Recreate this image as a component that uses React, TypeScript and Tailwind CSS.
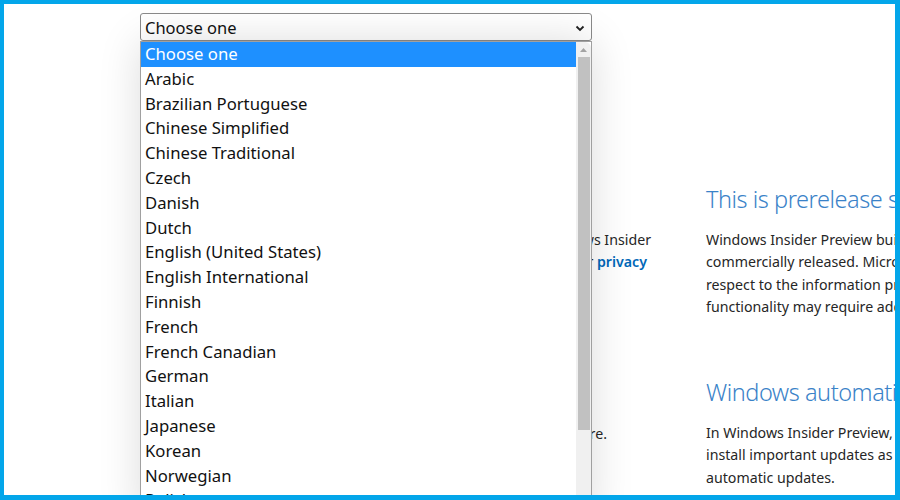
import React from "react";

const langs = [
  "Choose one",
  "Arabic",
  "Brazilian Portuguese",
  "Chinese Simplified",
  "Chinese Traditional",
  "Czech",
  "Danish",
  "Dutch",
  "English (United States)",
  "English International",
  "Finnish",
  "French",
  "French Canadian",
  "German",
  "Italian",
  "Japanese",
  "Korean",
  "Norwegian",
  "Polish",
];

export default function App() {
  return (
    <div className="w-[900px] h-[500px] bg-white border-[#03a6ea] border-t-[4px] border-l-[4px] border-r-[5px] border-b-[5px] overflow-hidden relative font-['Noto_Sans',sans-serif]">
      <div className="pl-[136px] pt-[9px]">
        {/* select */}
        <div className="w-[452px] h-[28px] border border-[#8a8a8a] rounded-[3px] flex items-center justify-between pl-[4px] pr-[6px] pt-[2px] text-[16.5px] text-[#111]">
          <span>Choose one</span>
          <svg width="10" height="7" viewBox="0 0 10 7">
            <path d="M1.5 1.5 L5 5 L8.5 1.5" fill="none" stroke="#222" strokeWidth="1.8" />
          </svg>
        </div>
      </div>

      {/* page content beneath */}
      <div className="flex pt-[142px]">
        <div className="w-[651px] shrink-0 text-[14.2px] leading-[22.3px] text-[#262626]">
          <div className="pt-[46px] text-right whitespace-nowrap pr-[4px]">By joining the program you agree to the terms of the Windows Insider</div>
          <div className="text-right whitespace-nowrap pr-[8px]">
            Program Agreement and understand our <span className="text-[#0067b8] font-semibold">privacy</span>
          </div>
          <div className="pt-[149px] text-right whitespace-nowrap pr-[48px]">You may leave the program at any time you choose to do so here.</div>
        </div>
        <div className="pl-[51px] shrink-0 w-[700px]">
          <h2 className="text-[23.5px] leading-[32px] tracking-[-0.45px] font-light text-[#3a82c8] whitespace-nowrap">This is prerelease software</h2>
          <p className="mt-[14px] text-[14.2px] leading-[22.3px] text-[#262626] whitespace-nowrap">
            Windows Insider Preview builds may be substantially modified before they are
            <br />
            commercially released. Microsoft makes no warranties, express or implied, with
            <br />
            respect to the information provided here. Some product features and
            <br />
            functionality may require additional hardware or software.
          </p>
          <h2 className="mt-[58px] text-[23.5px] leading-[32px] tracking-[-0.45px] font-light text-[#3a82c8] whitespace-nowrap">Windows automatic updates</h2>
          <p className="mt-[14px] text-[14.2px] leading-[22.3px] text-[#262626] whitespace-nowrap">
            In Windows Insider Preview, the automatic updates feature will download and
            <br />
            install important updates as they become available. You can't turn off
            <br />
            automatic updates.
          </p>
        </div>
      </div>

      {/* open dropdown list */}
      <div className="absolute left-[136px] top-[37px] w-[452px] h-[480px] bg-white border border-[#a0a0a0] shadow-[0_0_40px_rgba(0,0,0,0.14)] flex">
        <div className="flex-1 flex flex-col text-[16.7px] text-[#111]">
          {langs.map((l, i) => (
            <div
              key={l}
              className={
                i === 0
                  ? "h-[24.8px] leading-[24px] pl-[4px] bg-[#1e90ff] text-white"
                  : "h-[24.8px] leading-[24px] pl-[4px]"
              }
            >
              {l}
            </div>
          ))}
        </div>
        <div className="w-[15px] bg-[#f0f0f0] rounded-tr-[6px] flex flex-col items-center">
          <div className="h-[15px] flex items-center justify-center">
            <svg width="7" height="4" viewBox="0 0 7 4">
              <path d="M0 4 L3.5 0 L7 4 Z" fill="#a3a3a3" />
            </svg>
          </div>
          <div className="w-[12px] h-[373px] bg-[#c1c1c1]" />
        </div>
      </div>
    </div>
  );
}
